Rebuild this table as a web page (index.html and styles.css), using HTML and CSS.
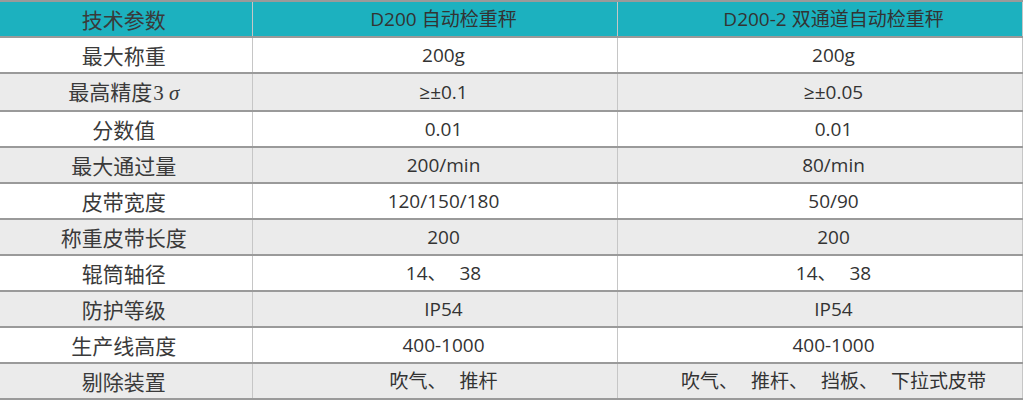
FILE: index.html
```html
<!DOCTYPE html>
<html lang="zh-CN">
<head>
<meta charset="utf-8">
<title>技术参数</title>
<link rel="stylesheet" href="styles.css">
</head>
<body>
<table class="spec">
  <colgroup>
    <col class="c1"><col class="c2"><col class="c3">
  </colgroup>
  <thead>
    <tr class="head">
      <th class="k">技术参数</th>
      <th class="v2">D200 自动检重秤</th>
      <th class="v3">D200-2 双通道自动检重秤</th>
    </tr>
  </thead>
  <tbody>
    <tr><td class="k">最大称重</td><td class="v2">200g</td><td class="v3">200g</td></tr>
    <tr class="alt"><td class="k">最高精度<span class="sigma">3 <i>σ</i></span></td><td class="v2">≥±0.1</td><td class="v3">≥±0.05</td></tr>
    <tr><td class="k">分数值</td><td class="v2">0.01</td><td class="v3">0.01</td></tr>
    <tr class="alt"><td class="k">最大通过量</td><td class="v2">200/min</td><td class="v3">80/min</td></tr>
    <tr><td class="k">皮带宽度</td><td class="v2">120/150/180</td><td class="v3">50/90</td></tr>
    <tr class="alt"><td class="k">称重皮带长度</td><td class="v2">200</td><td class="v3">200</td></tr>
    <tr><td class="k">辊筒轴径</td><td class="v2 sep">14、 38</td><td class="v3 sep">14、 38</td></tr>
    <tr class="alt"><td class="k">防护等级</td><td class="v2">IP54</td><td class="v3">IP54</td></tr>
    <tr><td class="k">生产线高度</td><td class="v2">400-1000</td><td class="v3">400-1000</td></tr>
    <tr class="alt"><td class="k">剔除装置</td><td class="v2 sep">吹气、 推杆</td><td class="v3 sep">吹气、 推杆、 挡板、 下拉式皮带</td></tr>
  </tbody>
</table>
</body>
</html>
```
FILE: styles.css
```css
html, body {
  margin: 0;
  padding: 0;
  background: #ffffff;
}

.spec {
  border-collapse: collapse;
  table-layout: fixed;
  width: 1022px;
  border-top: 2px solid #9a9a9a;
  color: #333333;
  font-family: "Open Sans", "Noto Sans CJK SC", sans-serif;
  font-size: 19px;
}

.c1 { width: 252px; }
.c2 { width: 365px; }
.c3 { width: 405px; }

.spec th,
.spec td {
  height: 34px;
  padding: 0;
  text-align: center;
  vertical-align: middle;
  font-weight: normal;
  border-bottom: 2px solid #9a9a9a;
  border-left: 1px solid #c6c6c6;
  line-height: 34px;
  white-space: nowrap;
}

.spec .k {
  border-left: none;
  font-family: "Noto Sans CJK SC", sans-serif;
  font-size: 21px;
  font-weight: 400;
  color: #3a3a3a;
  padding-right: 4px;
}

.spec .v2 { padding-left: 18px; }
.spec .v3 { padding-left: 28px; border-right: 1px solid #c6c6c6; }

.head th {
  background: #1cb1bf;
  color: #333333;
}

.alt td { background: #ebebeb; }

.sigma {
  font-family: "Liberation Serif", serif;
  font-size: 21px;
  margin-left: 1px;
}

.sep { word-spacing: 8px; }
```
